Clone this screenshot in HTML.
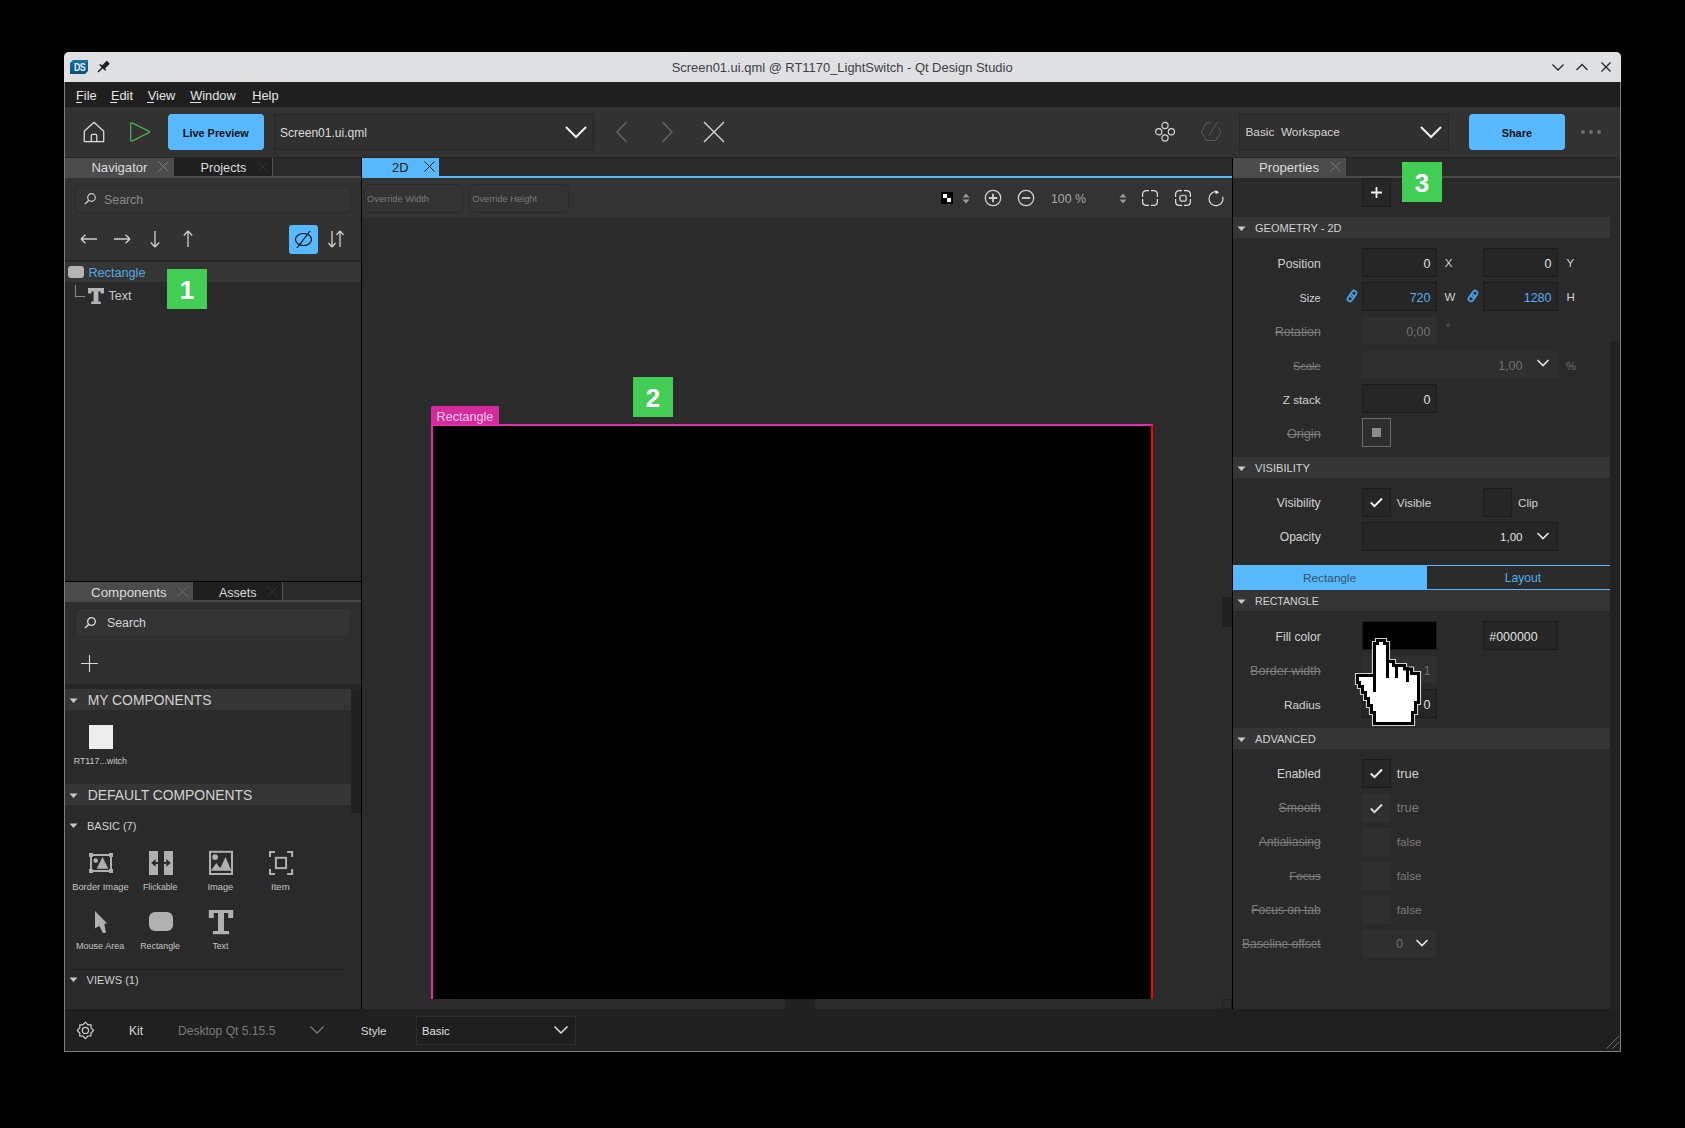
<!DOCTYPE html>
<html><head><meta charset="utf-8"><style>
html,body{margin:0;padding:0;}
body{width:1685px;height:1128px;overflow:hidden;background:#000;position:relative;font-family:"Liberation Sans", sans-serif;}
.a{position:absolute;}
.t{position:absolute;line-height:1;white-space:pre;}
</style></head><body>
<div class="a" style="left:64px;top:52px;width:1557px;height:1000px;background:#7e7e7e;border-top-left-radius:5px;border-top-right-radius:5px;"></div>
<div class="a" style="left:64px;top:52px;width:1557px;height:30px;background:#dee0e2;border-top-left-radius:5px;border-top-right-radius:5px;"></div>
<div class="a" style="left:65px;top:82px;width:1555px;height:25px;background:#1f1f1f;"></div>
<div class="a" style="left:65px;top:107px;width:1555px;height:50px;background:#323232;"></div>
<div class="a" style="left:65px;top:157px;width:296px;height:19px;background:#2a2a2a;"></div>
<div class="a" style="left:65px;top:176px;width:296px;height:2px;background:#4a4a4a;"></div>
<div class="a" style="left:65px;top:178px;width:296px;height:84px;background:#323232;"></div>
<div class="a" style="left:65px;top:260px;width:296px;height:2px;background:#262626;"></div>
<div class="a" style="left:65px;top:262px;width:296px;height:319px;background:#2a2a2a;"></div>
<div class="a" style="left:65px;top:262px;width:296px;height:20px;background:#353535;"></div>
<div class="a" style="left:65px;top:581px;width:296px;height:1px;background:#000;"></div>
<div class="a" style="left:65px;top:582px;width:296px;height:18px;background:#2a2a2a;"></div>
<div class="a" style="left:65px;top:600px;width:296px;height:2px;background:#4a4a4a;"></div>
<div class="a" style="left:65px;top:602px;width:296px;height:82px;background:#2f2f2f;"></div>
<div class="a" style="left:65px;top:684px;width:296px;height:5px;background:#262626;"></div>
<div class="a" style="left:65px;top:689px;width:296px;height:320px;background:#2a2a2a;"></div>
<div class="a" style="left:351px;top:689px;width:10px;height:124px;background:#212121;"></div>
<div class="a" style="left:65px;top:689px;width:286px;height:21px;background:#353535;"></div>
<div class="a" style="left:65px;top:784px;width:286px;height:21px;background:#353535;"></div>
<div class="a" style="left:361px;top:157px;width:1px;height:852px;background:#000;"></div>
<div class="a" style="left:362px;top:157px;width:870px;height:19px;background:#2a2a2a;"></div>
<div class="a" style="left:362px;top:176px;width:870px;height:2px;background:#57b9fc;"></div>
<div class="a" style="left:362px;top:178px;width:870px;height:40px;background:#333333;"></div>
<div class="a" style="left:362px;top:218px;width:870px;height:791px;background:#2b2b2b;"></div>
<div class="a" style="left:1232px;top:157px;width:1px;height:852px;background:#000;"></div>
<div class="a" style="left:1233px;top:157px;width:387px;height:19px;background:#2a2a2a;"></div>
<div class="a" style="left:1233px;top:176px;width:387px;height:2px;background:#4a4a4a;"></div>
<div class="a" style="left:1233px;top:178px;width:387px;height:831px;background:#2a2a2a;"></div>
<div class="a" style="left:1610px;top:341px;width:10px;height:668px;background:#222222;"></div>
<div class="a" style="left:1233px;top:217px;width:377px;height:21px;background:#353535;"></div>
<div class="a" style="left:1233px;top:457px;width:377px;height:21px;background:#353535;"></div>
<div class="a" style="left:1233px;top:590px;width:377px;height:21px;background:#353535;"></div>
<div class="a" style="left:1233px;top:728px;width:377px;height:21px;background:#353535;"></div>
<div class="a" style="left:65px;top:1009px;width:1555px;height:42px;background:#202020;"></div>
<svg class="a" style="left:70px;top:60px;" width="18" height="14" viewBox="0 0 18 14"><defs><linearGradient id="dsg" x1="0" y1="0" x2="0" y2="1"><stop offset="0" stop-color="#1672a8"/><stop offset="1" stop-color="#0a4f7e"/></linearGradient></defs><path d="M3 0 H18 V11 L15 14 H0 V3 Z" fill="url(#dsg)"/></svg>
<div class="t" style="left:73.6px;top:63px;font-size:10.4px;color:#e6eef4;font-weight:700;letter-spacing:-0.6px;transform:scaleX(0.85);transform-origin:0 0;">DS</div>
<svg class="a" style="left:97px;top:60px;" width="13" height="13" viewBox="0 0 13 13"><path d="M1.5 11.5 L5.5 7.5" stroke="#1e2023" stroke-width="1.6" stroke-linecap="round"/><path d="M3.2 4.8 L8.2 9.8" stroke="#1e2023" stroke-width="1.6" stroke-linecap="round"/><path d="M5 6.5 L9.8 1.7 L11.8 3.7 L7 8.5 Z" fill="#1e2023" stroke="#1e2023" stroke-width="1.6" stroke-linejoin="round"/></svg>
<div class="t" style="left:671.7px;top:62px;font-size:12.93px;color:#3e4144;">Screen01.ui.qml @ RT1170_LightSwitch - Qt Design Studio</div>
<svg class="a" style="left:1550px;top:60px;" width="70" height="16" viewBox="0 0 70 16"><path d="M2.5 4.5 L8 10 L13.5 4.5" fill="none" stroke="#232629" stroke-width="1.3"/><path d="M26.5 10 L32 4.5 L37.5 10" fill="none" stroke="#232629" stroke-width="1.3"/><path d="M51.5 2.5 L60.5 11.5 M60.5 2.5 L51.5 11.5" fill="none" stroke="#232629" stroke-width="1.3"/></svg>
<div class="t" style="left:76px;top:90px;font-size:12.8px;color:#e6e6e6;">File</div>
<div class="t" style="left:110.9px;top:90px;font-size:12.8px;color:#e6e6e6;">Edit</div>
<div class="t" style="left:147.8px;top:90px;font-size:12.8px;color:#e6e6e6;">View</div>
<div class="t" style="left:190.2px;top:90px;font-size:12.8px;color:#e6e6e6;">Window</div>
<div class="t" style="left:252.2px;top:90px;font-size:12.8px;color:#e6e6e6;">Help</div>
<div class="a" style="left:75.5px;top:102px;width:6px;height:1px;background:#e6e6e6;"></div>
<div class="a" style="left:110.4px;top:102px;width:7px;height:1px;background:#e6e6e6;"></div>
<div class="a" style="left:147.3px;top:102px;width:7px;height:1px;background:#e6e6e6;"></div>
<div class="a" style="left:189.7px;top:102px;width:11px;height:1px;background:#e6e6e6;"></div>
<div class="a" style="left:251.7px;top:102px;width:8px;height:1px;background:#e6e6e6;"></div>
<svg class="a" style="left:83px;top:121px;" width="22" height="22" viewBox="0 0 22 22"><path d="M1.3 20.5 V10.2 L11 1.3 L20.7 10.2 V20.5 Z" fill="none" stroke="#dedede" stroke-width="1.25" stroke-linejoin="round"/><path d="M8.3 20.5 V14.6 Q8.3 13.3 9.6 13.3 H12.5 Q13.8 13.3 13.8 14.6 V20.5" fill="none" stroke="#dedede" stroke-width="1.25"/></svg>
<svg class="a" style="left:129px;top:121px;" width="23" height="22" viewBox="0 0 23 22"><path d="M1.7 3.2 Q1.7 1.2 3.5 2.1 L19.8 10.1 Q21.2 10.9 19.8 11.7 L3.5 19.9 Q1.7 20.8 1.7 18.8 Z" fill="none" stroke="#4cab4c" stroke-width="1.3" stroke-linejoin="round"/></svg>
<div class="a" style="left:168px;top:114px;width:96px;height:36px;background:#57b9fc;border-radius:4px;"></div>
<div class="t" style="left:182.8px;top:128px;font-size:10.9px;color:#111;font-weight:700;">Live Preview</div>
<div class="a" style="left:274px;top:114px;width:320px;height:36px;background:#303030;border:1px solid #262626;box-sizing:border-box;"></div>
<div class="t" style="left:280px;top:127px;font-size:12.04px;color:#dcdcdc;">Screen01.ui.qml</div>
<svg class="a" style="left:564px;top:124px;" width="24" height="16" viewBox="0 0 24 16"><path d="M2 3 L12 13 L22 3" fill="none" stroke="#f0f0f0" stroke-width="2"/></svg>
<svg class="a" style="left:615px;top:120px;" width="14" height="24" viewBox="0 0 14 24"><path d="M11.5 2 L2 12 L11.5 22" fill="none" stroke="#6a6a6a" stroke-width="1.2"/></svg>
<svg class="a" style="left:660px;top:120px;" width="14" height="24" viewBox="0 0 14 24"><path d="M2.5 2 L12 12 L2.5 22" fill="none" stroke="#6a6a6a" stroke-width="1.2"/></svg>
<svg class="a" style="left:702px;top:120px;" width="24" height="24" viewBox="0 0 24 24"><path d="M2 2 L22 22 M22 2 L2 22" fill="none" stroke="#d8d8d8" stroke-width="1.3"/></svg>
<svg class="a" style="left:1153px;top:120px;" width="24" height="24" viewBox="0 0 24 24"><g fill="none" stroke="#d4d4d4" stroke-width="1.2"><circle cx="12" cy="5.5" r="3.1"/><circle cx="5.8" cy="11.7" r="3.1"/><circle cx="18.4" cy="11.7" r="3.1"/><circle cx="12" cy="18" r="3.1"/></g></svg>
<svg class="a" style="left:1199px;top:120px;" width="24" height="24" viewBox="0 0 24 24"><g fill="none" stroke="#5c5c5c" stroke-width="1"><path d="M12.2 3 H7.3 L2.3 11.7 L7.3 20.5 H16.8 L22 11.7 L19.6 7.6"/><path d="M10 15.8 L18.2 2.3"/></g></svg>
<div class="a" style="left:1239px;top:114px;width:210px;height:36px;background:#303030;border:1px solid #262626;box-sizing:border-box;"></div>
<div class="t" style="left:1245.5px;top:127px;font-size:11.8px;color:#d6d6d6;">Basic  Workspace</div>
<svg class="a" style="left:1419px;top:124px;" width="24" height="16" viewBox="0 0 24 16"><path d="M2 3 L12 13 L22 3" fill="none" stroke="#f0f0f0" stroke-width="2"/></svg>
<div class="a" style="left:1469px;top:114px;width:96px;height:36px;background:#57b9fc;border-radius:4px;"></div>
<div class="t" style="left:1501.7px;top:128px;font-size:10.9px;color:#111;font-weight:700;">Share</div>
<div class="a" style="left:1581px;top:130px;width:4px;height:4px;background:#6e6e6e;border-radius:2px;"></div>
<div class="a" style="left:1589px;top:130px;width:4px;height:4px;background:#6e6e6e;border-radius:2px;"></div>
<div class="a" style="left:1597px;top:130px;width:4px;height:4px;background:#6e6e6e;border-radius:2px;"></div>
<div class="a" style="left:65px;top:157px;width:1555px;height:1px;background:#262626;"></div>
<div class="a" style="left:65px;top:158px;width:109px;height:18px;background:#4b4b4b;"></div>
<div class="t" style="left:91.4px;top:161px;font-size:13.1px;color:#dcdcdc;">Navigator</div>
<svg class="a" style="left:158px;top:161px;" width="11" height="11" viewBox="0 0 11 11"><path d="M0.5 0.5 L10.5 10.5 M10.5 0.5 L0.5 10.5" stroke="#7a7a7a" stroke-width="1"/></svg>
<div class="a" style="left:174px;top:158px;width:98px;height:18px;background:#1f1f1f;"></div>
<div class="a" style="left:272px;top:158px;width:1px;height:18px;background:#555;"></div>
<div class="t" style="left:200.5px;top:162px;font-size:12.73px;color:#dcdcdc;">Projects</div>
<svg class="a" style="left:257px;top:161px;" width="11" height="11" viewBox="0 0 11 11"><path d="M0.5 0.5 L10.5 10.5 M10.5 0.5 L0.5 10.5" stroke="#333" stroke-width="1"/></svg>
<div class="a" style="left:75px;top:185px;width:276px;height:28px;background:#333333;border:1px solid #2a2a2a;box-sizing:border-box;border-radius:4px;"></div>
<svg class="a" style="left:84px;top:192px;" width="13" height="13" viewBox="0 0 13 13"><circle cx="7.5" cy="5.5" r="3.8" fill="none" stroke="#cfcfcf" stroke-width="1.2"/><path d="M4.8 8.2 L1 12" stroke="#cfcfcf" stroke-width="1.3"/></svg>
<div class="t" style="left:104.1px;top:194px;font-size:12.31px;color:#8a8a8a;">Search</div>
<svg class="a" style="left:78px;top:230px;" width="22" height="18" viewBox="0 0 22 18"><path d="M3 9 H19 M3 9 L7.5 4.8 M3 9 L7.5 13.2" fill="none" stroke="#d0d0d0" stroke-width="1.3"/></svg>
<svg class="a" style="left:111px;top:230px;" width="22" height="18" viewBox="0 0 22 18"><path d="M3 9 H19 M19 9 L14.5 4.8 M19 9 L14.5 13.2" fill="none" stroke="#d0d0d0" stroke-width="1.3"/></svg>
<svg class="a" style="left:146px;top:229px;" width="18" height="20" viewBox="0 0 18 20"><path d="M9 2 V18 M9 18 L4.8 13.5 M9 18 L13.2 13.5" fill="none" stroke="#d0d0d0" stroke-width="1.3"/></svg>
<svg class="a" style="left:179px;top:229px;" width="18" height="20" viewBox="0 0 18 20"><path d="M9 2 V18 M9 2 L4.8 6.5 M9 2 L13.2 6.5" fill="none" stroke="#d0d0d0" stroke-width="1.3"/></svg>
<div class="a" style="left:289px;top:225px;width:29px;height:29px;background:#57b9fc;border-radius:3px;"></div>
<svg class="a" style="left:289px;top:225px;" width="29" height="29" viewBox="0 0 29 29"><ellipse cx="14.5" cy="14.5" rx="8" ry="6" fill="none" stroke="#111" stroke-width="1.2"/><path d="M21 6 L8 23" stroke="#111" stroke-width="1.2"/></svg>
<svg class="a" style="left:326px;top:229px;" width="20" height="20" viewBox="0 0 20 20"><path d="M6 2 V18 M6 18 L2.5 14 M6 18 L9.5 14 M14 18 V2 M14 2 L10.5 6 M14 2 L17.5 6" fill="none" stroke="#d0d0d0" stroke-width="1.3"/></svg>
<div class="a" style="left:68px;top:266px;width:16px;height:12px;background:#b4b4b4;border-radius:3px;"></div>
<div class="t" style="left:88.4px;top:267px;font-size:12.68px;color:#52a8e8;">Rectangle</div>
<div class="a" style="left:74.5px;top:284.5px;width:1px;height:12px;background:#8a8a8a;"></div>
<div class="a" style="left:74.5px;top:296px;width:10px;height:1px;background:#8a8a8a;"></div>
<svg class="a" style="left:88px;top:288px;" width="16" height="17" viewBox="0 0 16 17"><path d="M0 0 H16 V5.4 H12.6 V3.4 H10.4 V13.4 H12.8 V16 H3.2 V13.4 H5.6 V3.4 H3.4 V5.4 H0 Z" fill="#b4b4b4"/></svg>
<div class="t" style="left:108.5px;top:290px;font-size:12.59px;color:#c8c8c8;">Text</div>
<div class="a" style="left:167px;top:269px;width:40px;height:40px;background:#42ce54;"></div>
<div class="t" style="left:167px;top:277px;font-size:26px;color:#fff;font-weight:700;width:40px;text-align:center;">1</div>
<div class="a" style="left:362px;top:158px;width:77px;height:18px;background:#57b9fc;"></div>
<div class="t" style="left:392px;top:161px;font-size:13px;color:#1a1a1a;">2D</div>
<svg class="a" style="left:424px;top:161px;" width="11" height="11" viewBox="0 0 11 11"><path d="M0.5 0.5 L10.5 10.5 M10.5 0.5 L0.5 10.5" stroke="#1a1a1a" stroke-width="1"/></svg>
<div class="a" style="left:364px;top:184px;width:99px;height:29px;border:1px solid #2a2a2a;box-sizing:border-box;border-radius:5px;"></div>
<div class="t" style="left:367px;top:195px;font-size:9.3px;color:#7a7a7a;">Override Width</div>
<div class="a" style="left:469px;top:184px;width:100px;height:29px;border:1px solid #2a2a2a;box-sizing:border-box;border-radius:5px;"></div>
<div class="t" style="left:472.3px;top:195px;font-size:9.24px;color:#7a7a7a;">Override Height</div>
<div class="a" style="left:941px;top:192px;width:12px;height:12px;background:#000;"></div>
<div class="a" style="left:943px;top:194px;width:4px;height:4px;background:#fff;"></div>
<div class="a" style="left:947px;top:198px;width:4px;height:4px;background:#fff;"></div>
<svg class="a" style="left:962px;top:193px;" width="8" height="11" viewBox="0 0 8 11"><path d="M0.5 4.5 L4 0.5 L7.5 4.5 Z M0.5 6.5 L4 10.5 L7.5 6.5 Z" fill="#9a9a9a"/></svg>
<svg class="a" style="left:984px;top:189px;" width="18" height="18" viewBox="0 0 18 18"><circle cx="9" cy="9" r="7.7" fill="none" stroke="#cfcfcf" stroke-width="1.3"/><path d="M9 4.8 V13.2 M4.8 9 H13.2" stroke="#cfcfcf" stroke-width="1.8"/></svg>
<svg class="a" style="left:1017px;top:189px;" width="18" height="18" viewBox="0 0 18 18"><circle cx="9" cy="9" r="7.7" fill="none" stroke="#cfcfcf" stroke-width="1.3"/><path d="M4.8 9 H13.2" stroke="#cfcfcf" stroke-width="1.8"/></svg>
<div class="t" style="left:1051px;top:193px;font-size:12.34px;color:#a8a8a8;">100 %</div>
<svg class="a" style="left:1119px;top:193px;" width="8" height="11" viewBox="0 0 8 11"><path d="M0.5 4.5 L4 0.5 L7.5 4.5 Z M0.5 6.5 L4 10.5 L7.5 6.5 Z" fill="#9a9a9a"/></svg>
<svg class="a" style="left:1141px;top:189px;" width="18" height="18" viewBox="0 0 18 18"><path d="M1.6 8 V5.6 Q1.6 1.6 5.6 1.6 H8 M10 1.6 H12.4 Q16.4 1.6 16.4 5.6 V8 M16.4 10 V12.4 Q16.4 16.4 12.4 16.4 H10 M8 16.4 H5.6 Q1.6 16.4 1.6 12.4 V10" fill="none" stroke="#e0e0e0" stroke-width="1.2"/></svg>
<svg class="a" style="left:1174px;top:189px;" width="18" height="18" viewBox="0 0 18 18"><path d="M1.6 8 V5.6 Q1.6 1.6 5.6 1.6 H8 M10 1.6 H12.4 Q16.4 1.6 16.4 5.6 V8 M16.4 10 V12.4 Q16.4 16.4 12.4 16.4 H10 M8 16.4 H5.6 Q1.6 16.4 1.6 12.4 V10" fill="none" stroke="#e0e0e0" stroke-width="1.2"/><rect x="6" y="6.5" width="6.2" height="5.6" rx="1.5" fill="none" stroke="#b4b4b4" stroke-width="1.7"/></svg>
<svg class="a" style="left:1207px;top:189px;" width="18" height="18" viewBox="0 0 18 18"><path d="M10.2 2.8 A7 7 0 1 0 15.76 7.9" fill="none" stroke="#e0e0e0" stroke-width="1.2"/><path d="M8.3 1 L12.2 3.2 L8.6 5.2 Z" fill="#e8e8e8"/></svg>
<div class="a" style="left:431px;top:406px;width:68px;height:20px;background:#d42a9d;border-top-left-radius:2px;border-top-right-radius:1px;"></div>
<div class="t" style="left:436.6px;top:411px;font-size:12.6px;color:#f0c8e8;">Rectangle</div>
<div class="a" style="left:431px;top:424px;width:722px;height:2px;background:#e22ca8;"></div>
<div class="a" style="left:431px;top:424px;width:2px;height:575px;background:#e52ca6;"></div>
<div class="a" style="left:1151px;top:425px;width:2px;height:574px;background:#ff0000;"></div>
<div class="a" style="left:433px;top:426px;width:718px;height:573px;background:#000;"></div>
<div class="a" style="left:785px;top:999px;width:30px;height:10px;background:#212121;"></div>
<div class="a" style="left:1222px;top:597px;width:10px;height:30px;background:#212121;"></div>
<div class="a" style="left:1222px;top:999px;width:10px;height:10px;border:1px solid #202020;box-sizing:border-box;"></div>
<div class="a" style="left:633px;top:377px;width:40px;height:40px;background:#42ce54;"></div>
<div class="t" style="left:633px;top:385px;font-size:26px;color:#fff;font-weight:700;width:40px;text-align:center;">2</div>
<div class="a" style="left:65px;top:582px;width:128px;height:18px;background:#4b4b4b;"></div>
<div class="t" style="left:91px;top:586px;font-size:13.37px;color:#dcdcdc;">Components</div>
<svg class="a" style="left:177px;top:586px;" width="11" height="11" viewBox="0 0 11 11"><path d="M0.5 0.5 L10.5 10.5 M10.5 0.5 L0.5 10.5" stroke="#6a6a6a" stroke-width="1"/></svg>
<div class="a" style="left:193px;top:582px;width:89px;height:18px;background:#1f1f1f;"></div>
<div class="a" style="left:282px;top:582px;width:1px;height:18px;background:#555;"></div>
<div class="t" style="left:219px;top:587px;font-size:12.5px;color:#dcdcdc;">Assets</div>
<svg class="a" style="left:267px;top:586px;" width="11" height="11" viewBox="0 0 11 11"><path d="M0.5 0.5 L10.5 10.5 M10.5 0.5 L0.5 10.5" stroke="#333" stroke-width="1"/></svg>
<div class="a" style="left:75px;top:608px;width:276px;height:29px;background:#333333;border:1px solid #2a2a2a;box-sizing:border-box;border-radius:4px;"></div>
<svg class="a" style="left:84px;top:616px;" width="13" height="13" viewBox="0 0 13 13"><circle cx="7.5" cy="5.5" r="3.8" fill="none" stroke="#e0e0e0" stroke-width="1.3"/><path d="M4.8 8.2 L1 12" stroke="#e0e0e0" stroke-width="1.4"/></svg>
<div class="t" style="left:107px;top:617px;font-size:12.31px;color:#d6d6d6;">Search</div>
<svg class="a" style="left:80px;top:654px;" width="19" height="19" viewBox="0 0 19 19"><path d="M9.5 1 V18 M1 9.5 H18" stroke="#d8d8d8" stroke-width="1.1"/></svg>
<svg class="a" style="left:69px;top:698px;" width="9" height="6" viewBox="0 0 9 6"><path d="M0.5 0.5 H8.5 L4.5 5 Z" fill="#c8c8c8"/></svg>
<div class="t" style="left:87.7px;top:694px;font-size:13.89px;color:#d2d2d2;">MY COMPONENTS</div>
<div class="a" style="left:89px;top:725px;width:24px;height:24px;background:#ececec;"></div>
<div class="t" style="left:73.7px;top:757px;font-size:8.85px;color:#c8c8c8;">RT117...witch</div>
<svg class="a" style="left:69px;top:793px;" width="9" height="6" viewBox="0 0 9 6"><path d="M0.5 0.5 H8.5 L4.5 5 Z" fill="#c8c8c8"/></svg>
<div class="t" style="left:87.7px;top:789px;font-size:13.89px;color:#d2d2d2;">DEFAULT COMPONENTS</div>
<svg class="a" style="left:69px;top:823px;" width="9" height="6" viewBox="0 0 9 6"><path d="M0.5 0.5 H8.5 L4.5 5 Z" fill="#c8c8c8"/></svg>
<div class="t" style="left:87px;top:821px;font-size:10.98px;color:#d2d2d2;">BASIC (7)</div>
<svg class="a" style="left:88px;top:852px;" width="26" height="22" viewBox="0 0 26 22"><rect x="3" y="3" width="20" height="16" fill="none" stroke="#b0b0b0" stroke-width="2"/><rect x="1" y="1" width="4" height="4" fill="#b0b0b0"/><rect x="21" y="1" width="4" height="4" fill="#b0b0b0"/><rect x="1" y="17" width="4" height="4" fill="#b0b0b0"/><rect x="21" y="17" width="4" height="4" fill="#b0b0b0"/><circle cx="7.7" cy="8.6" r="2.3" fill="#b0b0b0"/><path d="M14.5 4.9 L8.6 16.7 H20.3 Z" fill="#b0b0b0"/></svg>
<svg class="a" style="left:148px;top:850px;" width="26" height="26" viewBox="0 0 26 26"><rect x="1" y="1" width="9" height="24" fill="#b0b0b0"/><rect x="16" y="1" width="9" height="24" fill="#b0b0b0"/><path d="M3.1 13 L7.7 9.1 V16.8 Z M7.5 12 H10 V14 H7.5 Z" fill="#2a2a2a"/><path d="M22.8 13 L18.3 9.1 V16.8 Z M16 12 H18.5 V14 H16 Z" fill="#2a2a2a"/></svg>
<svg class="a" style="left:208px;top:850px;" width="26" height="26" viewBox="0 0 26 26"><rect x="2" y="1.8" width="22" height="22.2" fill="none" stroke="#b0b0b0" stroke-width="2"/><circle cx="7.1" cy="7.1" r="2.9" fill="#b0b0b0"/><path d="M2.8 20.8 L8.4 13 L12.2 18.2 L17.5 7.1 L23.4 20.8 Z" fill="#b0b0b0"/></svg>
<svg class="a" style="left:268px;top:850px;" width="26" height="26" viewBox="0 0 26 26"><path d="M2 7 V2 H7 M19.2 2 H24.2 V7 M24.2 19 V24 H19.2 M7 24 H2 V19" fill="none" stroke="#b0b0b0" stroke-width="2"/><rect x="7.9" y="7.8" width="10.2" height="10.3" fill="none" stroke="#b0b0b0" stroke-width="2"/></svg>
<div class="t" style="left:72.2px;top:883px;font-size:9.33px;color:#c4c4c4;">Border Image</div>
<div class="t" style="left:143px;top:883px;font-size:8.72px;color:#c4c4c4;">Flickable</div>
<div class="t" style="left:207.4px;top:883px;font-size:9.32px;color:#c4c4c4;">Image</div>
<div class="t" style="left:271px;top:882px;font-size:9.67px;color:#c4c4c4;">Item</div>
<svg class="a" style="left:94px;top:910px;" width="16" height="25" viewBox="0 0 16 25"><path d="M1 1 L13.2 13.5 L10.3 13.8 L12 22.8 L8.8 23 L5.3 15.8 L1 18.6 Z" fill="#b0b0b0"/></svg>
<div class="a" style="left:148.6px;top:912.4px;width:24.8px;height:19px;background:#b0b0b0;border-radius:6px;"></div>
<svg class="a" style="left:208px;top:909px;" width="26" height="26" viewBox="0 0 26 26"><path d="M0.8 0.9 H25.2 V9 H20.2 V4.1 H16 V21.9 H21.1 V25.2 H4.9 V21.9 H10 V4.1 H5.8 V9 H0.8 Z" fill="#b0b0b0"/></svg>
<div class="t" style="left:76px;top:942px;font-size:9.05px;color:#c4c4c4;">Mouse Area</div>
<div class="t" style="left:140.2px;top:942px;font-size:8.84px;color:#c4c4c4;">Rectangle</div>
<div class="t" style="left:212.4px;top:942px;font-size:8.72px;color:#c4c4c4;">Text</div>
<div class="a" style="left:70px;top:969px;width:276px;height:1px;background:#1e1e1e;"></div>
<svg class="a" style="left:69px;top:977px;" width="9" height="6" viewBox="0 0 9 6"><path d="M0.5 0.5 H8.5 L4.5 5 Z" fill="#c8c8c8"/></svg>
<div class="t" style="left:86.6px;top:975px;font-size:11.03px;color:#d2d2d2;">VIEWS (1)</div>
<svg class="a" style="left:76px;top:1021px;" width="19" height="19" viewBox="0 0 19 19"><path d="M9.4 1.2 L12.0 3.8 L15.0 3.8 L15.0 6.8 L17.6 9.4 L15.0 12.0 L15.0 15.0 L12.0 15.0 L9.4 17.6 L6.8 15.0 L3.8 15.0 L3.8 12.0 L1.2 9.4 L3.8 6.8 L3.8 3.8 L6.8 3.8 Z" fill="none" stroke="#d0d0d0" stroke-width="1.2" stroke-linejoin="round"/><circle cx="9.4" cy="9.4" r="3.1" fill="none" stroke="#d0d0d0" stroke-width="1.2"/></svg>
<div class="t" style="left:129px;top:1025px;font-size:12px;color:#d8d8d8;">Kit</div>
<div class="t" style="left:178px;top:1025px;font-size:12.08px;color:#7a7a7a;">Desktop Qt 5.15.5</div>
<svg class="a" style="left:309px;top:1024px;" width="16" height="12" viewBox="0 0 16 12"><path d="M1.5 2.5 L8 9 L14.5 2.5" fill="none" stroke="#7a7a7a" stroke-width="1.3"/></svg>
<div class="t" style="left:360.7px;top:1025px;font-size:11.6px;color:#d8d8d8;">Style</div>
<div class="a" style="left:416px;top:1016px;width:160px;height:29px;background:#1e1e1e;border:1px solid #2c2c2c;box-sizing:border-box;"></div>
<div class="t" style="left:422px;top:1026px;font-size:11.25px;color:#e0e0e0;">Basic</div>
<svg class="a" style="left:553px;top:1024px;" width="16" height="12" viewBox="0 0 16 12"><path d="M1.5 2.5 L8 9 L14.5 2.5" fill="none" stroke="#dcdcdc" stroke-width="1.5"/></svg>
<svg class="a" style="left:1600px;top:1030px;" width="20" height="20" viewBox="0 0 20 20"><path d="M19 6 L6 19 M19 12 L12 19" stroke="#6a6a6a" stroke-width="1"/></svg>
<div class="a" style="left:1233px;top:158px;width:113px;height:18px;background:#4b4b4b;"></div>
<div class="t" style="left:1259px;top:161px;font-size:13.16px;color:#dcdcdc;">Properties</div>
<svg class="a" style="left:1330px;top:161px;" width="11" height="11" viewBox="0 0 11 11"><path d="M0.5 0.5 L10.5 10.5 M10.5 0.5 L0.5 10.5" stroke="#777" stroke-width="1"/></svg>
<div class="a" style="left:1362px;top:178px;width:29px;height:29px;background:#262626;border:1px solid #1c1c1c;box-sizing:border-box;"></div>
<svg class="a" style="left:1369px;top:185px;" width="15" height="15" viewBox="0 0 15 15"><path d="M7.5 2 V13 M2 7.5 H13" stroke="#f0f0f0" stroke-width="1.8"/></svg>
<div class="a" style="left:1402px;top:162px;width:40px;height:40px;background:#42ce54;"></div>
<div class="t" style="left:1402px;top:170px;font-size:26px;color:#fff;font-weight:700;width:40px;text-align:center;">3</div>
<svg class="a" style="left:1237px;top:226px;" width="9" height="6" viewBox="0 0 9 6"><path d="M0.5 0.5 H8.5 L4.5 5 Z" fill="#c8c8c8"/></svg>
<div class="t" style="left:1255px;top:223px;font-size:11.03px;color:#d2d2d2;">GEOMETRY - 2D</div>
<div class="t" style="right:364.3px;top:258px;font-size:12.14px;color:#d2d2d2;">Position</div>
<div class="a" style="left:1362px;top:248px;width:75px;height:29px;background:#262626;border:1px solid #1c1c1c;box-sizing:border-box;"></div>
<div class="t" style="right:254.5px;top:258px;font-size:12.5px;color:#e0e0e0;">0</div>
<div class="t" style="left:1444.8px;top:258px;font-size:11.5px;color:#d2d2d2;">X</div>
<div class="a" style="left:1483px;top:248px;width:75px;height:29px;background:#262626;border:1px solid #1c1c1c;box-sizing:border-box;"></div>
<div class="t" style="right:133.5px;top:258px;font-size:12.5px;color:#e0e0e0;">0</div>
<div class="t" style="left:1566.5px;top:258px;font-size:11.5px;color:#d2d2d2;">Y</div>
<div class="t" style="right:364.3px;top:293px;font-size:10.95px;color:#d2d2d2;">Size</div>
<svg class="a" style="left:1345px;top:289px;" width="14" height="14" viewBox="0 0 14 14"><g fill="none" stroke="#4aa6ec" stroke-width="1.7" transform="rotate(-55 7 7)"><rect x="1" y="4.6" width="7.4" height="4.8" rx="2.4"/><rect x="5.6" y="4.6" width="7.4" height="4.8" rx="2.4"/></g></svg>
<div class="a" style="left:1362px;top:282px;width:75px;height:29px;background:#262626;border:1px solid #1c1c1c;box-sizing:border-box;"></div>
<div class="t" style="right:254.5px;top:292px;font-size:12.5px;color:#5aaef0;">720</div>
<div class="t" style="left:1444.4px;top:292px;font-size:11.5px;color:#d2d2d2;letter-spacing:-0.5px;">W</div>
<svg class="a" style="left:1466px;top:289px;" width="14" height="14" viewBox="0 0 14 14"><g fill="none" stroke="#4aa6ec" stroke-width="1.7" transform="rotate(-55 7 7)"><rect x="1" y="4.6" width="7.4" height="4.8" rx="2.4"/><rect x="5.6" y="4.6" width="7.4" height="4.8" rx="2.4"/></g></svg>
<div class="a" style="left:1483px;top:282px;width:75px;height:29px;background:#262626;border:1px solid #1c1c1c;box-sizing:border-box;"></div>
<div class="t" style="right:133.5px;top:292px;font-size:12.5px;color:#5aaef0;">1280</div>
<div class="t" style="left:1566.5px;top:292px;font-size:11.5px;color:#d2d2d2;">H</div>
<div class="t" style="right:364.3px;top:326px;font-size:12.27px;color:#7e7e7e;text-decoration:line-through;">Rotation</div>
<div class="a" style="left:1362px;top:317px;width:75px;height:27px;background:#2f2f2f;"></div>
<div class="t" style="right:254.5px;top:326px;font-size:12.5px;color:#6e6e6e;">0,00</div>
<div class="t" style="left:1446px;top:323px;font-size:10px;color:#6e6e6e;">°</div>
<div class="t" style="right:364.3px;top:361px;font-size:11.07px;color:#7e7e7e;text-decoration:line-through;">Scale</div>
<div class="a" style="left:1362px;top:351px;width:196px;height:27px;background:#2f2f2f;"></div>
<div class="t" style="right:162.5px;top:360px;font-size:12.5px;color:#6e6e6e;">1,00</div>
<svg class="a" style="left:1536px;top:358px;" width="14" height="10" viewBox="0 0 14 10"><path d="M1.5 2 L7 7.5 L12.5 2" fill="none" stroke="#e6e6e6" stroke-width="1.6"/></svg>
<div class="t" style="left:1566px;top:361px;font-size:11.5px;color:#6e6e6e;">%</div>
<div class="t" style="right:364.3px;top:394px;font-size:11.79px;color:#d2d2d2;">Z stack</div>
<div class="a" style="left:1362px;top:384px;width:75px;height:29px;background:#262626;border:1px solid #1c1c1c;box-sizing:border-box;"></div>
<div class="t" style="right:254.5px;top:394px;font-size:12.5px;color:#e0e0e0;">0</div>
<div class="t" style="right:364.3px;top:428px;font-size:12.63px;color:#7e7e7e;text-decoration:line-through;">Origin</div>
<div class="a" style="left:1362px;top:418px;width:29px;height:29px;background:#2e2e2e;border:1px solid #6a6a6a;box-sizing:border-box;"></div>
<div class="a" style="left:1372px;top:428px;width:9px;height:9px;background:#8a8a8a;"></div>
<svg class="a" style="left:1237px;top:466px;" width="9" height="6" viewBox="0 0 9 6"><path d="M0.5 0.5 H8.5 L4.5 5 Z" fill="#c8c8c8"/></svg>
<div class="t" style="left:1255px;top:463px;font-size:11.12px;color:#d2d2d2;">VISIBILITY</div>
<div class="t" style="right:364.3px;top:497px;font-size:12.24px;color:#d2d2d2;">Visibility</div>
<div class="a" style="left:1362px;top:488px;width:29px;height:29px;background:#262626;border:1px solid #1c1c1c;box-sizing:border-box;"></div>
<svg class="a" style="left:1369px;top:496px;" width="15" height="13" viewBox="0 0 15 13"><path d="M1.8 6.5 L5.5 10.2 L13 2.5" fill="none" stroke="#f0f0f0" stroke-width="2"/></svg>
<div class="t" style="left:1396.8px;top:497px;font-size:11.78px;color:#d2d2d2;">Visible</div>
<div class="a" style="left:1483px;top:488px;width:29px;height:29px;background:#262626;border:1px solid #1c1c1c;box-sizing:border-box;"></div>
<div class="t" style="left:1518px;top:497px;font-size:11.61px;color:#d2d2d2;">Clip</div>
<div class="t" style="right:364.3px;top:531px;font-size:12.09px;color:#d2d2d2;">Opacity</div>
<div class="a" style="left:1362px;top:522px;width:196px;height:29px;background:#262626;border:1px solid #1c1c1c;box-sizing:border-box;"></div>
<div class="t" style="right:162.5px;top:532px;font-size:11.56px;color:#e0e0e0;">1,00</div>
<svg class="a" style="left:1536px;top:531px;" width="14" height="10" viewBox="0 0 14 10"><path d="M1.5 2 L7 7.5 L12.5 2" fill="none" stroke="#e6e6e6" stroke-width="1.6"/></svg>
<div class="a" style="left:1233px;top:565px;width:194px;height:25px;background:#57b9fc;"></div>
<div class="a" style="left:1427px;top:565px;width:183px;height:25px;background:#2a2a2a;border-top:1px solid #57b9fc;border-bottom:1px solid #57b9fc;box-sizing:border-box;"></div>
<div class="t" style="left:1303px;top:573px;font-size:11.84px;color:#34546e;">Rectangle</div>
<div class="t" style="left:1504.7px;top:572px;font-size:12.12px;color:#52aeee;">Layout</div>
<svg class="a" style="left:1237px;top:599px;" width="9" height="6" viewBox="0 0 9 6"><path d="M0.5 0.5 H8.5 L4.5 5 Z" fill="#c8c8c8"/></svg>
<div class="t" style="left:1255px;top:596px;font-size:10.57px;color:#d2d2d2;">RECTANGLE</div>
<div class="t" style="right:364.3px;top:631px;font-size:12.14px;color:#d2d2d2;">Fill color</div>
<div class="a" style="left:1362px;top:621px;width:75px;height:29px;background:#000;border:1px solid #1c1c1c;box-sizing:border-box;"></div>
<div class="a" style="left:1483px;top:621px;width:75px;height:29px;background:#262626;border:1px solid #1c1c1c;box-sizing:border-box;"></div>
<div class="t" style="left:1489.3px;top:631px;font-size:12.43px;color:#e0e0e0;">#000000</div>
<div class="t" style="right:364.3px;top:665px;font-size:12.59px;color:#7e7e7e;text-decoration:line-through;">Border width</div>
<div class="a" style="left:1362px;top:656px;width:75px;height:27px;background:#2f2f2f;"></div>
<div class="t" style="right:254.5px;top:665px;font-size:12px;color:#6e6e6e;">1</div>
<div class="t" style="right:364.3px;top:699px;font-size:11.79px;color:#d2d2d2;">Radius</div>
<div class="a" style="left:1362px;top:689px;width:75px;height:29px;background:#262626;border:1px solid #1c1c1c;box-sizing:border-box;"></div>
<div class="t" style="right:254.5px;top:699px;font-size:12.5px;color:#e0e0e0;">0</div>
<svg class="a" style="left:1237px;top:737px;" width="9" height="6" viewBox="0 0 9 6"><path d="M0.5 0.5 H8.5 L4.5 5 Z" fill="#c8c8c8"/></svg>
<div class="t" style="left:1255px;top:734px;font-size:11.09px;color:#d2d2d2;">ADVANCED</div>
<div class="t" style="right:364.3px;top:769px;font-size:11.88px;color:#d2d2d2;">Enabled</div>
<div class="a" style="left:1362px;top:759px;width:29px;height:29px;background:#262626;border:1px solid #1c1c1c;box-sizing:border-box;"></div>
<svg class="a" style="left:1369px;top:767px;" width="15" height="13" viewBox="0 0 15 13"><path d="M1.8 6.5 L5.5 10.2 L13 2.5" fill="none" stroke="#f0f0f0" stroke-width="2"/></svg>
<div class="t" style="left:1396.8px;top:768px;font-size:12.77px;color:#d2d2d2;">true</div>
<div class="t" style="right:364.3px;top:802px;font-size:12.24px;color:#7e7e7e;text-decoration:line-through;">Smooth</div>
<div class="a" style="left:1362px;top:794px;width:29px;height:28px;background:#2f2f2f;"></div>
<svg class="a" style="left:1369px;top:802px;" width="15" height="13" viewBox="0 0 15 13"><path d="M1.8 6.5 L5.5 10.2 L13 2.5" fill="none" stroke="#d8d8d8" stroke-width="2"/></svg>
<div class="t" style="left:1396.8px;top:802px;font-size:12.77px;color:#7a7a7a;">true</div>
<div class="t" style="right:364.3px;top:836px;font-size:12.12px;color:#7e7e7e;text-decoration:line-through;">Antialiasing</div>
<div class="a" style="left:1362px;top:828px;width:29px;height:28px;background:#2f2f2f;"></div>
<div class="t" style="left:1396.8px;top:836px;font-size:11.74px;color:#7a7a7a;">false</div>
<div class="t" style="right:364.3px;top:870px;font-size:11.6px;color:#7e7e7e;text-decoration:line-through;">Focus</div>
<div class="a" style="left:1362px;top:862px;width:29px;height:28px;background:#2f2f2f;"></div>
<div class="t" style="left:1396.8px;top:870px;font-size:11.74px;color:#7a7a7a;">false</div>
<div class="t" style="right:364.3px;top:904px;font-size:12.04px;color:#7e7e7e;text-decoration:line-through;">Focus on tab</div>
<div class="a" style="left:1362px;top:896px;width:29px;height:28px;background:#2f2f2f;"></div>
<div class="t" style="left:1396.8px;top:904px;font-size:11.74px;color:#7a7a7a;">false</div>
<div class="t" style="right:364.3px;top:938px;font-size:12.02px;color:#7e7e7e;text-decoration:line-through;">Baseline offset</div>
<div class="a" style="left:1362px;top:930px;width:74px;height:27px;background:#2f2f2f;"></div>
<div class="t" style="right:282px;top:938px;font-size:12.5px;color:#6e6e6e;">0</div>
<svg class="a" style="left:1415px;top:938px;" width="14" height="10" viewBox="0 0 14 10"><path d="M1.5 2 L7 7.5 L12.5 2" fill="none" stroke="#e6e6e6" stroke-width="1.6"/></svg>
<svg class="a" style="left:1350px;top:633px;" width="76" height="98" viewBox="0 0 76 98"><defs><clipPath id="hc"><path d="M1376 639 H1386 V642 H1389 V660 H1395 V664 H1406 V667.5 H1413 V672 H1420 V704 H1417 V714 H1414 V725 H1373 V714 H1370 V707 H1367 V700 H1364 V694 H1361 V688 H1358 V684 H1356 V674 H1373 V642 H1376 Z"/></clipPath></defs><g transform="translate(-1350,-633)">
<path d="M1376 639 H1386 V642 H1389 V660 H1395 V664 H1406 V667.5 H1413 V672 H1420 V704 H1417 V714 H1414 V725 H1373 V714 H1370 V707 H1367 V700 H1364 V694 H1361 V688 H1358 V684 H1356 V674 H1373 V642 H1376 Z" fill="none" stroke="#d0d0d0" stroke-width="2.2"/>
<path d="M1376 639 H1386 V642 H1389 V660 H1395 V664 H1406 V667.5 H1413 V672 H1420 V704 H1417 V714 H1414 V725 H1373 V714 H1370 V707 H1367 V700 H1364 V694 H1361 V688 H1358 V684 H1356 V674 H1373 V642 H1376 Z" fill="#fff" stroke="#000" stroke-width="6" clip-path="url(#hc)"/>
<rect x="1373" y="674" width="3" height="18" fill="#000"/>
<rect x="1386" y="660" width="3" height="18" fill="#000"/>
<rect x="1395" y="664" width="3" height="14" fill="#000"/>
<rect x="1406" y="667" width="3" height="15" fill="#000"/>
</g></svg>
</body></html>
